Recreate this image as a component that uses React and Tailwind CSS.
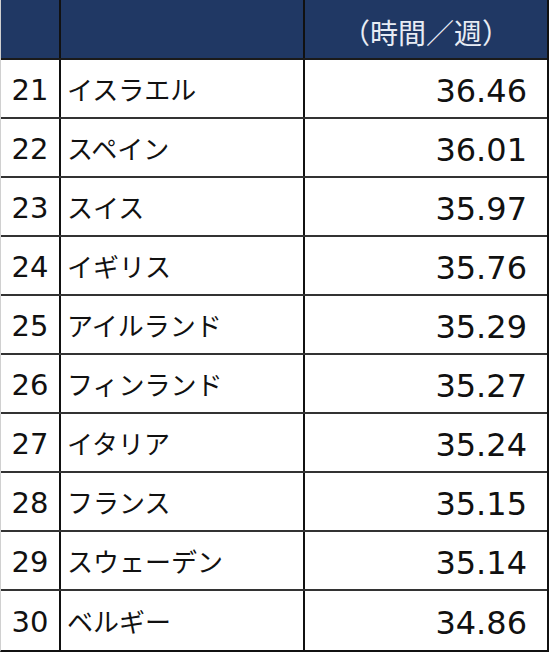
import React from 'react';

const rows = [
    { rank: 21, name: 'イスラエル', hours: '36.46' },
    { rank: 22, name: 'スペイン', hours: '36.01' },
    { rank: 23, name: 'スイス', hours: '35.97' },
    { rank: 24, name: 'イギリス', hours: '35.76' },
    { rank: 25, name: 'アイルランド', hours: '35.29' },
    { rank: 26, name: 'フィンランド', hours: '35.27' },
    { rank: 27, name: 'イタリア', hours: '35.24' },
    { rank: 28, name: 'フランス', hours: '35.15' },
    { rank: 29, name: 'スウェーデン', hours: '35.14' },
    { rank: 30, name: 'ベルギー', hours: '34.86' },
];

const font = { fontFamily: '"Noto Sans CJK JP", "Noto Sans", sans-serif' };
const digits = { fontFamily: '"DejaVu Sans", "Noto Sans CJK JP", sans-serif' };

export default function App() {
    return (
        <div className="w-[550px] h-[652px] bg-white" style={font}>
            <div className="w-[549px] border-l border-l-[#d0d0d0] border-r-2 border-r-[#111] border-b-2 border-b-[#111]">
                <div className="grid grid-cols-[60px_244px_1fr] h-[60px] bg-[#203864] border-b-2 border-b-[#1a1a1a]">
                    <div className="border-r-2 border-r-[#111]" />
                    <div className="border-r-2 border-r-[#111]" />
                    <div className="flex items-center justify-center pt-[6px] text-[28px] text-[#e8ecf4] leading-none">
                        （時間／週）
                    </div>
                </div>
                {rows.map((row, i) => (
                    <div
                        key={row.rank}
                        className={`grid grid-cols-[60px_244px_1fr] h-[59px] ${i < rows.length - 1 ? 'border-b-2 border-b-[#333]' : ''}`}
                    >
                        <div className="flex items-center justify-center pt-[4px] border-r-2 border-r-[#111] text-[29px] text-[#111] leading-none" style={digits}>
                            {row.rank}
                        </div>
                        <div className="flex items-center pl-[6px] border-r-2 border-r-[#111] text-[26px] text-[#111] leading-none">
                            {row.name}
                        </div>
                        <div className="flex items-center justify-end pt-[4px] pr-[20px] text-[32px] text-[#111] leading-none" style={digits}>
                            {row.hours}
                        </div>
                    </div>
                ))}
            </div>
        </div>
    );
}
